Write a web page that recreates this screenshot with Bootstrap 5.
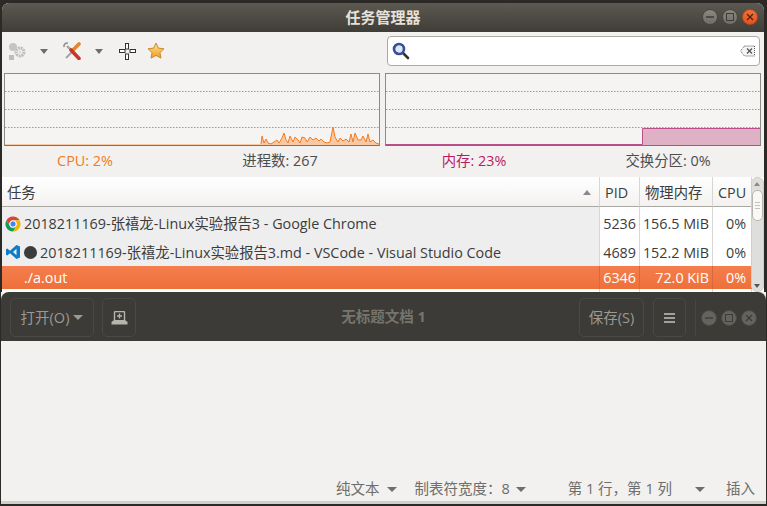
<!DOCTYPE html>
<html lang="zh-CN">
<head>
    <meta charset="UTF-8">
    <meta name="viewport" content="width=device-width, initial-scale=1.0">
    <title>任务管理器</title>
    <link rel="stylesheet" href="https://cdn.jsdelivr.net/npm/bootstrap@5.3.0/dist/css/bootstrap.min.css">
    <style>
        html, body {
            height: 506px;
            overflow: hidden;
        }
        body {
            background-color: #2b2a27;
            font-family: "Open Sans", "Noto Sans CJK SC", sans-serif;
            font-size: 14px;
            color: #3c3c3c;
        }
        .task-win {
            margin: 3px 3px 0 2px;
            height: 289px;
            background: #f2f1f0;
            overflow: hidden;
            border-radius: 7px 7px 0 0;
        }
        .title-wrap {
            position: relative;
        }
        .title-bar {
            height: 29px;
            background: linear-gradient(#5b5951, #3f3d37);
            color: #e6e2da;
            font-weight: 700;
            font-size: 15px;
        }
        .win-btns {
            right: 6px;
            top: 6px;
        }
        .win-btn {
            width: 16px;
            height: 16px;
            border-radius: 50%;
            background: linear-gradient(#8a887f, #6f6d65);
            border: 1px solid #494740;
        }
        .win-btn.close-dot {
            background: linear-gradient(#f0703a, #e05522);
            border-color: #b9471c;
        }
        .tool-row {
            height: 41px;
            padding: 0 4px 0 0;
        }
        .tool-icons {
            width: 385px;
            padding: 0 0 3px 6px;
        }
        .tool-caret {
            width: 0;
            height: 0;
            border-left: 4px solid transparent;
            border-right: 4px solid transparent;
            border-top: 5px solid #6d6d6d;
        }
        .gap-caret { margin-left: 14px; }
        .gap-tools { margin-left: 15px; }
        .gap-move { margin-left: 16px; }
        .gap-star { margin-left: 11px; }
        .search-box {
            flex: 1;
            height: 30px;
            margin-top: 4px;
            background: #fff;
            border: 1px solid #aaa9a4;
            border-radius: 4px;
            padding: 0 4px;
        }
        .graphs {
            padding: 0 3px 0 2px;
            gap: 5px;
        }
        .graph-box {
            width: 376px;
            height: 73px;
            border: 1px solid #8c8b88;
            border-bottom-color: #77736f;
            background: #f5f4f3;
        }
        .graph-box svg {
            display: block;
        }
        .stat-row {
            height: 31px;
            padding-top: 4px;
            font-size: 14.4px;
        }
        .stat-row > div {
            text-align: center;
        }
        .stat-cpu { width: 166px; color: #f47a1f; }
        .stat-count { width: 224px; color: #4c4c4c; }
        .stat-mem { width: 164px; color: #bb1c60; }
        .stat-swap { width: 228px; margin-left: -2px; color: #4c4c4c; margin-right: -40px; }
        .table-wrap {
            position: relative;
            height: 115px;
            overflow: hidden;
            background: #fff;
        }
        .proc-table {
            table-layout: fixed;
            width: 750px;
            margin: 0;
            font-size: 14.35px;
            color: #3c3c3c;
            border-collapse: separate;
            border-spacing: 0;
        }
        .col-name { width: 598px; }
        .col-pid { width: 40px; }
        .col-mem { width: 73px; }
        .col-cpu { width: 39px; }
        .proc-table th, .proc-table td {
            padding: 0 5px;
            border: 0;
            border-right: 1px solid #d7d6d3;
            font-weight: 400;
            white-space: nowrap;
            background: transparent;
            box-shadow: none;
            color: inherit;
            vertical-align: middle;
        }
        .proc-table thead th {
            height: 30px;
            padding-top: 2px;
            border-bottom: 1px solid #a9a8a3;
            background: linear-gradient(#ffffff, #f3f2f0);
        }
        .proc-table td.name-cell {
            background: #eeeeee;
            padding-left: 3px;
        }
        .proc-table .row-a td { height: 32px; padding-top: 2px; }
        .proc-table .row-b td { height: 27px; }
        .proc-table .row-sel td,
        .proc-table .row-sel td.name-cell {
            height: 23px;
            background: linear-gradient(#f47e4e, #ee7039);
            color: #fff;
            border-right-color: #d9693a;
        }
        .proc-table .row-tail td { height: 10px; }
        .proc-table td.num { text-align: right; padding-left: 0; padding-right: 3px; }
        .proc-table td.num-cpu { padding-right: 5px; }
        .name-gap { gap: 3px; }
        .tail-name { padding-left: 19px; }
        .sort-caret {
            width: 0;
            height: 0;
            border-left: 4px solid transparent;
            border-right: 4px solid transparent;
            border-bottom: 5px solid #8a8a8a;
            margin-right: 3px;
        }
        .dot-modified {
            width: 13px;
            height: 13px;
            border-radius: 50%;
            background: #3c3c3c;
        }
        .scroll-track {
            position: absolute;
            right: 0;
            top: 0;
            width: 13px;
            height: 115px;
            background: #dededc;
            border: 1px solid #cfcecb;
            border-radius: 6px;
        }
        .scroll-thumb {
            position: absolute;
            top: 12px;
            left: 0;
            width: 11px;
            height: 31px;
            background: #f8f8f7;
            border: 1px solid #b6b5b1;
            border-radius: 5px;
        }
        .scroll-up, .scroll-down {
            position: absolute;
            left: 2px;
            width: 0;
            height: 0;
            border-left: 3.5px solid transparent;
            border-right: 3.5px solid transparent;
        }
        .scroll-up { top: 4px; border-bottom: 4px solid #8a8a8a; }
        .scroll-down { bottom: 3px; border-top: 4px solid #555; }
        .edit-win {
            margin: 0 1px;
            height: 212px;
            background: #f2f1f0;
            display: flex;
            flex-direction: column;
        }
        .edit-head {
            height: 49px;
            background: #3c3b37;
            border-radius: 8px 8px 0 0;
            padding: 6px 0 0 9px;
            color: #9a9992;
            position: relative;
        }
        .edit-btn {
            height: 39px;
            border: 1px solid #4a4945;
            border-radius: 5px;
            background: #3c3b37;
            color: #9a9992;
            font-size: 14.5px;
            padding: 0;
        }
        .open-btn { width: 84px; }
        .new-btn { width: 34px; }
        .save-btn { width: 65px; margin-right: 9px; }
        .menu-btn { width: 33px; }
        .edit-title {
            position: absolute;
            left: 0;
            right: 0;
            top: 14px;
            text-align: center;
            color: #76746d;
            font-weight: 700;
            font-size: 14.5px;
        }
        .edit-right {
            position: absolute;
            right: 9px;
            top: 6px;
        }
        .edit-sep {
            width: 1px;
            height: 36px;
            background: #47463f;
            margin: 0 5px 0 9px;
        }
        .dim-btn {
            width: 16px;
            height: 16px;
            border-radius: 50%;
            background: #64635d;
            border: 1px solid #4a4945;
        }
        .caret-light {
            width: 0;
            height: 0;
            border-left: 5px solid transparent;
            border-right: 5px solid transparent;
            border-top: 5px solid #9a9992;
        }
        .edit-body {
            flex: 1;
        }
        .status-line {
            height: 34px;
            color: #6e6e6a;
            font-size: 14.5px;
            padding-top: 10px;
        }
        .status-caret {
            width: 0;
            height: 0;
            border-left: 5px solid transparent;
            border-right: 5px solid transparent;
            border-top: 5px solid #6e6e6a;
        }
        .st-a { margin-left: 335px; }
        .st-a-caret { margin-left: 7px; }
        .st-b { margin-left: 18px; }
        .st-b-caret { margin-left: 6px; }
        .st-c { margin-left: 42px; }
        .st-c-caret { margin-left: 23px; }
        .st-d { margin-left: 21px; }
        .bottom-shade {
            height: 3px;
            background: #cfcfcd;
        }
    </style>
</head>
<body>

<div class="task-win">
    <div class="title-wrap">
        <div class="title-bar d-flex align-items-center justify-content-center">任务管理器</div>
        <div class="win-btns position-absolute d-flex gap-1">
            <div class="win-btn d-flex align-items-center justify-content-center">
                <svg width="8" height="8"><path d="M0 4h8" stroke="#3c3b37" stroke-width="1.3"/></svg>
            </div>
            <div class="win-btn d-flex align-items-center justify-content-center">
                <svg width="8" height="8"><rect x=".5" y=".5" width="7" height="7" fill="none" stroke="#3c3b37"/></svg>
            </div>
            <div class="win-btn close-dot d-flex align-items-center justify-content-center">
                <svg width="8" height="8"><path d="M1 1l6 6M7 1l-6 6" stroke="#4a2210" stroke-width="1.2"/></svg>
            </div>
        </div>
    </div>

    <div class="tool-row d-flex">
        <div class="tool-icons d-flex align-items-center">
            <!-- gears, greyed out -->
            <svg width="18" height="18" viewBox="0 0 18 18">
                <circle cx="5" cy="5" r="4" fill="#c4c4c2"/>
                <circle cx="12" cy="10" r="4" fill="none" stroke="#bfbfbd" stroke-width="3" stroke-dasharray="2 .7"/>
                <circle cx="12" cy="10" r="1.5" fill="#dadad8"/>
                <rect x="1" y="13" width="5" height="5" fill="#bdbdbb"/>
            </svg>
            <div class="tool-caret gap-caret"></div>
            <svg class="gap-tools" width="18" height="18" viewBox="0 0 18 18">
                <path d="M3 16L10 9" stroke="#a5a5a1" stroke-width="2"/>
                <path d="M10 8l6-6" stroke="#e2872e" stroke-width="3.6" stroke-linecap="round"/>
                <path d="M4 4l4 4" stroke="#a5a5a1" stroke-width="2.4"/>
                <path d="M8 8l8 8.5" stroke="#c8352d" stroke-width="3.6" stroke-linecap="round"/>
                <path d="M5 1.2A3 3 0 0 0 1.2 5" fill="none" stroke="#8f8f8b" stroke-width="1.6"/>
            </svg>
            <div class="tool-caret gap-caret"></div>
            <svg class="gap-move" width="17" height="17" viewBox="0 0 17 17">
                <g fill="#fff" stroke="#333" stroke-width="1">
                    <rect x="6.5" y=".5" width="3" height="5.5"/>
                    <rect x="6.5" y="11" width="3" height="5.5"/>
                    <rect x=".5" y="6.5" width="5.5" height="3"/>
                    <rect x="11" y="6.5" width="5.5" height="3"/>
                </g>
            </svg>
            <svg class="gap-star" width="18" height="18" viewBox="0 0 18 18">
                <defs>
                    <linearGradient id="starFill" x1="0" y1="0" x2="0" y2="1">
                        <stop offset="0" stop-color="#fde29a"/>
                        <stop offset="1" stop-color="#f39a1f"/>
                    </linearGradient>
                </defs>
                <path d="M9 1l2.4 5.1 5.6.7-4.1 3.8 1.1 5.5L9 13.4l-5 2.7 1.1-5.5L1 6.8l5.6-.7z" fill="url(#starFill)" stroke="#c98a2b"/>
            </svg>
        </div>
        <div class="search-box d-flex align-items-center justify-content-between">
            <svg width="18" height="18" viewBox="0 0 18 18">
                <path d="M11 11l5 5" stroke="#333" stroke-width="2.6" stroke-linecap="round"/>
                <circle cx="7" cy="7" r="5" fill="#dfe6f5" stroke="#34509b" stroke-width="2.6"/>
            </svg>
            <svg width="15" height="12" viewBox="0 0 15 12">
                <path d="M4.5 1h10v10h-10L.5 6z" fill="#f4f4f4" stroke="#555" stroke-dasharray="1 1"/>
                <path d="M7 3.5l5 5M12 3.5l-5 5" stroke="#555" stroke-width="1.3"/>
            </svg>
        </div>
    </div>

    <div class="graphs d-flex">
        <div class="graph-box">
            <svg width="374" height="71" viewBox="0 0 374 71">
                <path d="M0 17.5h374M0 35.5h374M0 53.5h374" stroke="#9a9a98" stroke-dasharray="1.5 1.5"/>
                <path d="M0 70H256L257 62 259 69 261 65 263 69 266 70 269 68 272 66 274 69 277 64 279 59 281 66 283 69 285 62 288 68 290 63 293 66 295 69 297 63 300 64 302 68 305 63 308 66 311 64 314 67 316 65 319 68 322 69 325 68 328 53 330 63 333 68 335 64 338 67 341 65 344 68 346 60 348 68 350 59 353 66 356 66 358 62 361 68 363 60 365 68 368 66 371 69 374 70V71H0Z" fill="#f8c9a3"/>
                <path d="M256 70L257 62 259 69 261 65 263 69 266 70 269 68 272 66 274 69 277 64 279 59 281 66 283 69 285 62 288 68 290 63 293 66 295 69 297 63 300 64 302 68 305 63 308 66 311 64 314 67 316 65 319 68 322 69 325 68 328 53 330 63 333 68 335 64 338 67 341 65 344 68 346 60 348 68 350 59 353 66 356 66 358 62 361 68 363 60 365 68 368 66 371 69 374 70" fill="none" stroke="#f47a1f"/>
            </svg>
        </div>
        <div class="graph-box">
            <svg width="374" height="71" viewBox="0 0 374 71">
                <path d="M0 17.5h374M0 35.5h374M0 53.5h374" stroke="#9a9a98" stroke-dasharray="1.5 1.5"/>
                <path d="M0 70H256.5V54H374V71H0Z" fill="#deb2c4"/>
                <path d="M0 70.5H256.5V54.5H374" fill="none" stroke="#b9508a"/>
            </svg>
        </div>
    </div>

    <div class="stat-row d-flex">
        <div class="stat-cpu">CPU: 2%</div>
        <div class="stat-count">进程数: 267</div>
        <div class="stat-mem">内存: 23%</div>
        <div class="stat-swap">交换分区: 0%</div>
    </div>

    <div class="table-wrap">
        <table class="table proc-table">
            <colgroup>
                <col class="col-name"><col class="col-pid"><col class="col-mem"><col class="col-cpu">
            </colgroup>
            <thead>
                <tr>
                    <th>
                        <div class="d-flex align-items-center justify-content-between"><span>任务</span><span class="sort-caret"></span></div>
                    </th>
                    <th>PID</th>
                    <th>物理内存</th>
                    <th>CPU</th>
                </tr>
            </thead>
            <tbody>
                <tr class="row-a">
                    <td class="name-cell">
                        <div class="d-flex align-items-center name-gap">
                            <svg width="16" height="16" viewBox="0 0 16 16">
                                <path d="M1.5 4.25A7.5 7.5 0 0 1 14.5 4.25H8A3.75 3.75 0 0 0 4.75 9.9Z" fill="#db4437"/>
                                <path d="M14.5 4.25A7.5 7.5 0 0 1 8 15.5L11.25 9.9A3.75 3.75 0 0 0 8 4.25Z" fill="#f4b400"/>
                                <path d="M8 15.5A7.5 7.5 0 0 1 1.5 4.25L4.75 9.9A3.75 3.75 0 0 0 11.25 9.9Z" fill="#0f9d58"/>
                                <circle cx="8" cy="8" r="3.2" fill="#4285f4" stroke="#fff"/>
                            </svg>
                            <span>2018211169-张禧龙-Linux实验报告3 - Google Chrome</span>
                        </div>
                    </td>
                    <td class="num">5236</td>
                    <td class="num">156.5 MiB</td>
                    <td class="num num-cpu">0%</td>
                </tr>
                <tr class="row-b">
                    <td class="name-cell">
                        <div class="d-flex align-items-center name-gap">
                            <svg width="16" height="16" viewBox="0 0 16 16">
                                <path d="M11.5 1L15 2.6V13.4L11.5 15 5 9.3 2.3 11.4 1 10.7V5.3L2.3 4.6 5 6.7zM11.5 4.7L8 8l3.5 3.3z" fill="#0f7cc9" fill-rule="evenodd"/>
                            </svg>
                            <span class="dot-modified"></span>
                            <span>2018211169-张禧龙-Linux实验报告3.md - VSCode - Visual Studio Code</span>
                        </div>
                    </td>
                    <td class="num">4689</td>
                    <td class="num">152.2 MiB</td>
                    <td class="num num-cpu">0%</td>
                </tr>
                <tr class="row-sel">
                    <td class="name-cell"><span class="tail-name">./a.out</span></td>
                    <td class="num">6346</td>
                    <td class="num">72.0 KiB</td>
                    <td class="num num-cpu">0%</td>
                </tr>
                <tr class="row-tail">
                    <td></td><td></td><td></td><td></td>
                </tr>
            </tbody>
        </table>
        <div class="scroll-track">
            <span class="scroll-up"></span>
            <div class="scroll-thumb d-flex align-items-center justify-content-center">
                <svg width="5" height="7"><path d="M0 .5h5M0 3.5h5M0 6.5h5" stroke="#c2c1bd"/></svg>
            </div>
            <span class="scroll-down"></span>
        </div>
    </div>
</div>

<div class="edit-win">
    <div class="edit-head d-flex gap-2">
        <button type="button" class="edit-btn open-btn d-flex align-items-center justify-content-center gap-1">打开(O)<span class="caret-light"></span></button>
        <button type="button" class="edit-btn new-btn d-flex align-items-center justify-content-center">
            <svg width="17" height="14" viewBox="0 0 17 14">
                <path d="M3.5 9V1.5a1 1 0 0 1 1-1h8a1 1 0 0 1 1 1V9" fill="none" stroke="#b5b4ad" stroke-width="1.4"/>
                <path d="M3 9H14L16.5 11V13.5H.5V11Z" fill="#b5b4ad"/>
                <path d="M8.5 2.5v5M6 5h5" stroke="#b5b4ad" stroke-width="1.4"/>
            </svg>
        </button>
        <div class="edit-title">无标题文档 1</div>
        <div class="edit-right d-flex align-items-center">
            <button type="button" class="edit-btn save-btn">保存(S)</button>
            <button type="button" class="edit-btn menu-btn d-flex align-items-center justify-content-center">
                <svg width="11" height="10" viewBox="0 0 11 10"><path d="M0 1h11M0 5h11M0 9h11" stroke="#c4c3bc" stroke-width="1.7"/></svg>
            </button>
            <div class="edit-sep"></div>
            <div class="d-flex gap-1">
                <div class="dim-btn d-flex align-items-center justify-content-center">
                    <svg width="8" height="8"><path d="M0 4h8" stroke="#3c3b37" stroke-width="1.3"/></svg>
                </div>
                <div class="dim-btn d-flex align-items-center justify-content-center">
                    <svg width="8" height="8"><rect x=".5" y=".5" width="7" height="7" fill="none" stroke="#3c3b37"/></svg>
                </div>
                <div class="dim-btn d-flex align-items-center justify-content-center">
                    <svg width="8" height="8"><path d="M1 1l6 6M7 1l-6 6" stroke="#3c3b37" stroke-width="1.2"/></svg>
                </div>
            </div>
        </div>
    </div>
    <div class="edit-body"></div>
    <div class="status-line d-flex align-items-center">
        <span class="st-a">纯文本</span><span class="status-caret st-a-caret"></span>
        <span class="st-b">制表符宽度：8</span><span class="status-caret st-b-caret"></span>
        <span class="st-c">第 1 行，第 1 列</span><span class="status-caret st-c-caret"></span>
        <span class="st-d">插入</span>
    </div>
    <div class="bottom-shade"></div>
</div>

</body>
</html>
